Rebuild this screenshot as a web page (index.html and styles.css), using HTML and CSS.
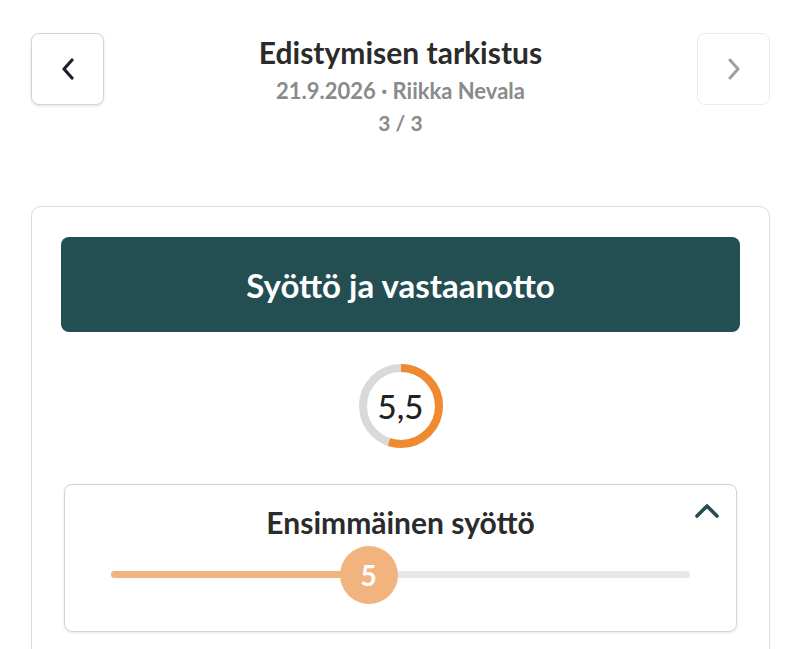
FILE: index.html
```html
<!DOCTYPE html>
<html>
<head>
    <link rel="stylesheet" href="styles.css">
</head>
<body>
    <div class="page">
        <!-- Top navigation -->
        <div class="top-bar">
            <button type="button" class="nav-btn">
                <svg width="14" height="22" viewBox="0 0 14 22">
                    <path d="M11 2 L3 11 L11 20" fill="none" stroke="#1d2030" stroke-width="3.2" stroke-linecap="round" stroke-linejoin="round"/>
                </svg>
            </button>
            <div class="title-block">
                <h1>Edistymisen tarkistus</h1>
                <p class="meta">21.9.2026 · Riikka Nevala</p>
                <p class="count">3 / 3</p>
            </div>
            <button type="button" class="nav-btn disabled">
                <svg width="14" height="22" viewBox="0 0 14 22">
                    <path d="M3 2 L11 11 L3 20" fill="none" stroke="#a0a0a0" stroke-width="3" stroke-linecap="round" stroke-linejoin="round"/>
                </svg>
            </button>
        </div>

        <!-- Skill card -->
        <div class="card">
            <div class="card-header">Syöttö ja vastaanotto</div>

            <div class="score">
                <svg width="88" height="88" viewBox="0 0 88 88" class="score-ring">
                    <circle cx="44" cy="44" r="38" fill="none" stroke="#d9d9d9" stroke-width="8"/>
                    <circle cx="44" cy="44" r="38" fill="none" stroke="#f08a2e" stroke-width="8"
                            stroke-dasharray="131.3 238.8" transform="rotate(-90 44 44)"/>
                </svg>
                <span class="score-value">5,5</span>
            </div>

            <div class="item">
                <div class="item-head">
                    <h2>Ensimmäinen syöttö</h2>
                    <svg class="toggle" width="26" height="18" viewBox="0 0 26 18">
                        <path d="M3 15 L13 5 L23 15" fill="none" stroke="#234f52" stroke-width="3.6" stroke-linecap="round" stroke-linejoin="round"/>
                    </svg>
                </div>
                <div class="slider">
                    <div class="track">
                        <div class="fill" style="width: 44.5%;"></div>
                        <div class="thumb" style="left: 44.5%;">5</div>
                    </div>
                </div>
            </div>
        </div>
    </div>
</body>
</html>
```

FILE: styles.css
```css
body {
    margin: 0;
    background: #fff;
    font-family: Lato, "Open Sans", sans-serif;
}

.page {
    padding: 33px 30px 0 31px;
}

.top-bar {
    display: flex;
    justify-content: space-between;
    align-items: flex-start;
}

.nav-btn {
    width: 73px;
    height: 72px;
    display: flex;
    align-items: center;
    justify-content: center;
    background: #fff;
    border: 1.5px solid #d4d4d4;
    border-radius: 8px;
    box-shadow: 0 1px 3px rgba(0, 0, 0, 0.12);
    padding: 0;
    cursor: pointer;
}

.nav-btn.disabled {
    border-color: #ececec;
    box-shadow: none;
}

.title-block {
    text-align: center;
}

.title-block h1 {
    margin: 0;
    font-size: 30px;
    font-weight: 700;
    color: #2b2b2b;
    line-height: 38px;
}

.title-block .meta {
    margin: 4px 0 0;
    font-size: 22px;
    font-weight: 700;
    color: #8a8a8a;
    line-height: 32px;
}

.title-block .count {
    margin: 1px 0 0;
    font-size: 21px;
    font-weight: 700;
    color: #8a8a8a;
    line-height: 30px;
}

.card {
    margin-top: 68px;
    border: 1.5px solid #dcdcdc;
    border-radius: 10px;
    padding: 30px 29px 40px;
}

.card-header {
    background: #234f52;
    color: #fff;
    border-radius: 8px;
    height: 95px;
    display: flex;
    align-items: center;
    justify-content: center;
    font-size: 33px;
    font-weight: 700;
}

.score {
    position: relative;
    width: 88px;
    height: 88px;
    margin: 30px auto 0;
}

.score-ring {
    display: block;
}

.score-value {
    position: absolute;
    inset: 0;
    display: flex;
    align-items: center;
    justify-content: center;
    font-size: 33px;
    font-weight: 500;
    color: #222;
}

.item {
    margin: 34px 3px 0;
    border: 1.5px solid #d4d4d4;
    border-radius: 8px;
    box-shadow: 0 1px 3px rgba(0, 0, 0, 0.1);
    padding: 18px 46px 28px;
}

.item-head {
    position: relative;
    text-align: center;
}

.item-head h2 {
    margin: 0;
    font-size: 30px;
    font-weight: 700;
    color: #2b2b2b;
    line-height: 38px;
}

.toggle {
    position: absolute;
    right: -30px;
    top: -2px;
}

.slider {
    padding: 30px 0 25px;
}

.track {
    position: relative;
    height: 7px;
    border-radius: 4px;
    background: #e4e8ea;
}

.fill {
    height: 100%;
    background: #f2b47f;
    border-radius: 4px 0 0 4px;
}

.thumb {
    position: absolute;
    top: 50%;
    width: 58px;
    height: 58px;
    margin: -29px 0 0 -29px;
    border-radius: 50%;
    background: #f2b47f;
    color: #fff;
    display: flex;
    align-items: center;
    justify-content: center;
    font-size: 28px;
    font-weight: 700;
}
```
